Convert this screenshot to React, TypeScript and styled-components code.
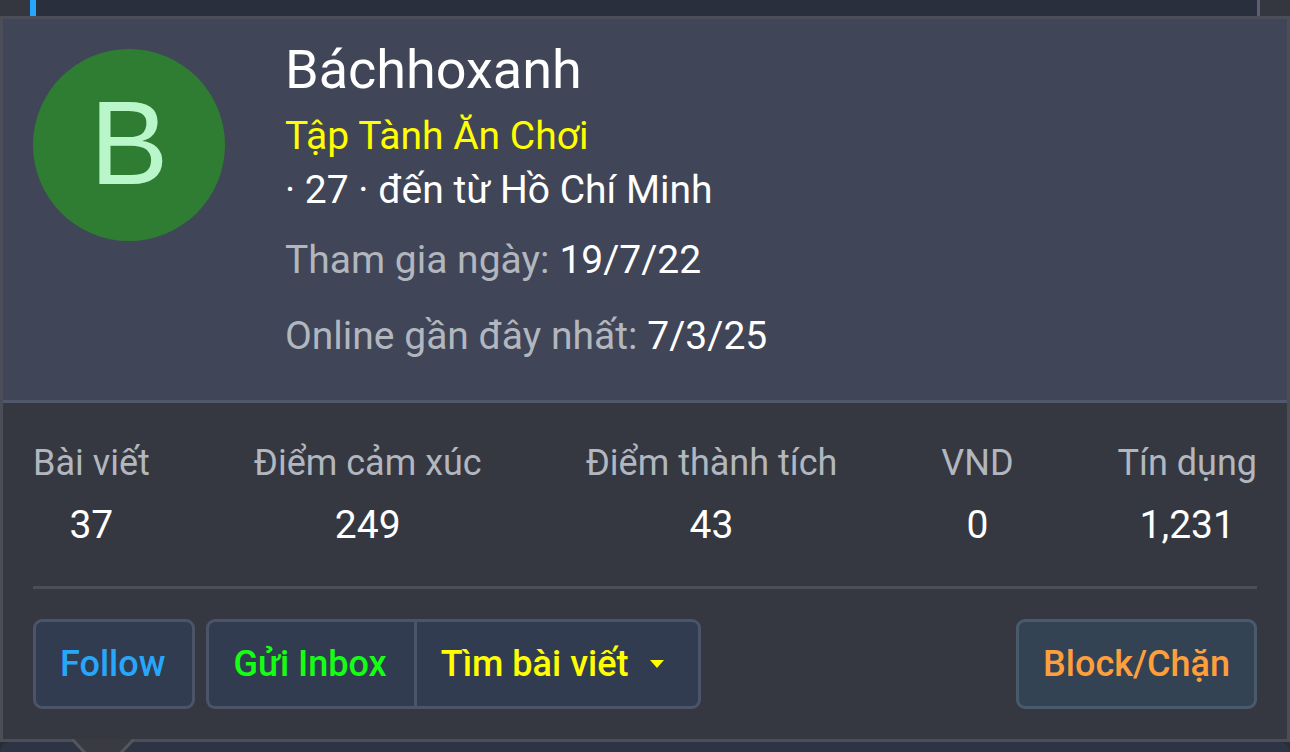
import React from "react";
import styled, { createGlobalStyle } from "styled-components";

const Global = createGlobalStyle`
  *, *::before, *::after { box-sizing: border-box; }
  html, body { margin: 0; }
  body {
    background: #2a2d36;
    color: #ffffff;
    font-family: Roboto, "Noto Sans", sans-serif;
    font-size: 39px;
    overflow: hidden;
  }
`;

const Page = styled.main`
  display: flex;
  flex-direction: column;
  min-height: 100vh;
  overflow: hidden;
`;

const PostEdge = styled.div`
  height: 16px;
  padding: 0 30px;
  background: #34373f;
`;

const PostBody = styled.div`
  height: 100%;
  background: #292f3d;
  border-left: 6px solid #27a7fb;
  border-right: 3px solid #5a6072;
`;

const NextPost = styled.div`
  flex: 1;
  border-radius: 12px 12px 0 0;
  background: #2d3443;
`;

const Card = styled.article`
  position: relative;
  background: #353841;
  border: 3px solid #4b4e59;
`;

const Header = styled.header`
  display: flex;
  gap: 60px;
  padding: 18px 30px 37px;
  background: #404557;
  border-bottom: 3px solid #51586b;
`;

const Avatar = styled.a`
  display: flex;
  flex: none;
  align-items: center;
  justify-content: center;
  width: 192px;
  height: 192px;
  margin-top: 12px;
  padding-bottom: 4px;
  border-radius: 50%;
  background: #2f7d32;
  color: #b9f6ca;
  font-family: "Liberation Sans", Arial, sans-serif;
  font-size: 118px;
  line-height: 1;
  text-decoration: none;
`;

const Info = styled.div`
  flex: 1;
  min-width: 0;
`;

const Name = styled.h1`
  margin: 0 0 6px;
  font-size: 54px;
  font-weight: 400;
  line-height: 66px;

  a {
    color: inherit;
    text-decoration: none;
  }
`;

const Blurb = styled.div<{ $color?: string }>`
  color: ${(p) => p.$color ?? "#ffffff"};
  line-height: 54px;
`;

const Dates = styled.dl`
  display: grid;
  gap: 22px;
  margin: 16px 0 0;
  line-height: 54px;
`;

const DateRow = styled.div`
  display: flex;
  gap: 10px;

  dt { color: #b2b7bf; }
  dd { margin: 0; }
`;

const Details = styled.div`
  padding: 30px;
`;

const Stats = styled.dl`
  display: flex;
  justify-content: space-between;
  margin: 0;
  padding-bottom: 29px;
  border-bottom: 3px solid #4b4e59;
  text-align: center;
`;

const Stat = styled.div`
  dt {
    color: #b2b7bf;
    font-size: 36px;
    line-height: 60px;
  }
  dd {
    margin: 0;
    line-height: 64px;
  }
`;

const Actions = styled.div`
  display: flex;
  gap: 11px;
  margin-top: 30px;
`;

const Group = styled.div`
  display: flex;
`;

const Button = styled.button<{ $color: string; $block?: boolean }>`
  display: flex;
  align-items: center;
  gap: 22px;
  height: 90px;
  margin: 0;
  padding: 0 27px 0 24px;
  border: 3px solid ${(p) => (p.$block ? "#4a5a6d" : "#4b5469")};
  border-radius: 9px;
  background: ${(p) => (p.$block ? "#344354" : "#323c50")};
  color: ${(p) => p.$color};
  font-family: inherit;
  font-size: 36px;
  font-weight: 500;
  cursor: pointer;
  white-space: nowrap;

  ${Group} > &:first-child {
    border-right: 0;
    border-radius: 9px 0 0 9px;
  }
  ${Group} > &:last-child {
    padding-right: 34px;
    border-radius: 0 9px 9px 0;
  }
  ${Actions} > &:last-child {
    margin-left: auto;
    padding-right: 24px;
  }
`;

const Caret = styled.span`
  border: 7px solid transparent;
  border-top: 8px solid currentColor;
  border-bottom: 0;
`;

const Arrow = styled.svg`
  position: absolute;
  top: 100%;
  left: 67px;
  display: block;
`;

const stats = [
  ["Bài viết", "37"],
  ["Điểm cảm xúc", "249"],
  ["Điểm thành tích", "43"],
  ["VND", "0"],
  ["Tín dụng", "1,231"],
];

export default function App() {
  return (
    <>
      <Global />
      <Page>
        <PostEdge>
          <PostBody />
        </PostEdge>
        <Card>
          <Header>
            <Avatar href="#profile" aria-label="Báchhoxanh">B</Avatar>
            <Info>
              <Name><a href="#profile">Báchhoxanh</a></Name>
              <Blurb $color="#ffff00">Tập Tành Ăn Chơi</Blurb>
              <Blurb>· 27 · đến từ Hồ Chí Minh</Blurb>
              <Dates>
                <DateRow><dt>Tham gia ngày:</dt><dd>19/7/22</dd></DateRow>
                <DateRow><dt>Online gần đây nhất:</dt><dd>7/3/25</dd></DateRow>
              </Dates>
            </Info>
          </Header>
          <Details>
            <Stats>
              {stats.map(([label, value]) => (
                <Stat key={label}>
                  <dt>{label}</dt>
                  <dd>{value}</dd>
                </Stat>
              ))}
            </Stats>
            <Actions>
              <Button $color="#27a7fb">Follow</Button>
              <Group>
                <Button $color="#14ff14">Gửi Inbox</Button>
                <Button $color="#ffff00" aria-haspopup="menu">Tìm bài viết<Caret /></Button>
              </Group>
              <Button $color="#ff9f3c" $block>Block/Chặn</Button>
            </Actions>
          </Details>
          <Arrow width="66" height="34" viewBox="0 0 66 34" aria-hidden="true">
            <path d="M2 0 L33 33 L64 0 Z" fill="#3a3b42" />
            <path d="M2 0 L33 33 L64 0" fill="none" stroke="#54565f" strokeWidth="3" />
          </Arrow>
        </Card>
        <NextPost />
      </Page>
    </>
  );
}
